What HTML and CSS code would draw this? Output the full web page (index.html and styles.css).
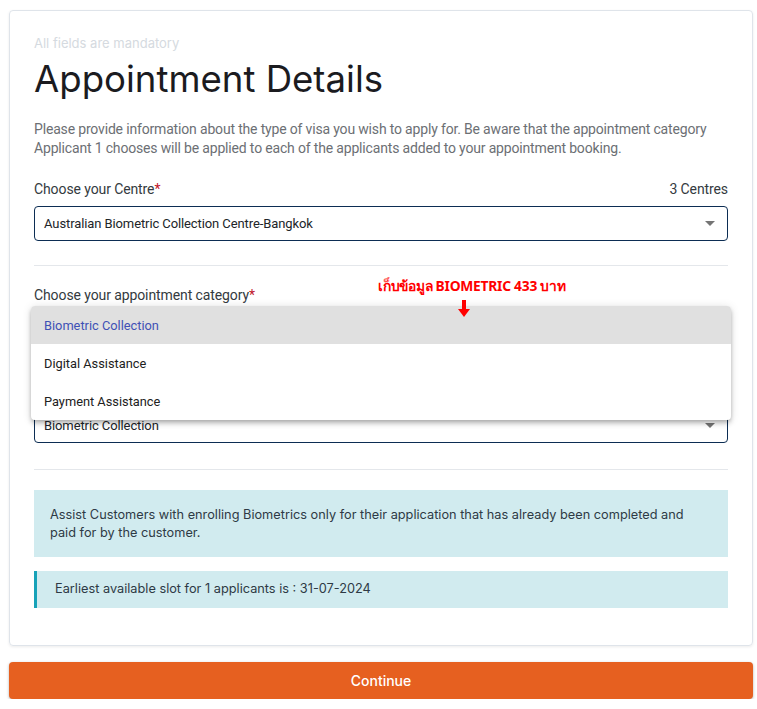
FILE: index.html
```html
<!DOCTYPE html>
<html>
<head>
<meta charset="utf-8">
<link rel="stylesheet" href="styles.css">
</head>
<body>
<div class="page">
  <div class="card">
    <div class="mandatory">All fields are mandatory</div>
    <h1 class="title">Appointment Details</h1>
    <p class="intro">Please provide information about the type of visa you wish to apply for. Be aware that the appointment category Applicant 1 chooses will be applied to each of the applicants added to your appointment booking.</p>

    <div class="field">
      <div class="label-row">
        <span class="label">Choose your Centre<span class="req">*</span></span>
        <span class="count">3 Centres</span>
      </div>
      <div class="select">
        <span>Australian Biometric Collection Centre-Bangkok</span>
        <span class="caret"></span>
      </div>
    </div>

    <hr class="divider">

    <div class="field cat-field">
      <div class="label-row">
        <span class="label">Choose your appointment category<span class="req">*</span></span>
      </div>
      <div class="select lower">
        <span>Biometric Collection</span>
        <span class="caret"></span>
      </div>
      <div class="note">เก็บข้อมูล BIOMETRIC 433 บาท</div>
      <svg class="arrow" width="12" height="17" viewBox="0 0 12 17"><rect x="4" y="0" width="4" height="9" fill="#f00"/><polygon points="0,9 12,9 6,17" fill="#f00"/></svg>
      <ul class="menu">
        <li class="active">Biometric Collection</li>
        <li>Digital Assistance</li>
        <li>Payment Assistance</li>
      </ul>
    </div>

    <hr class="divider second">

    <div class="info">Assist Customers with enrolling Biometrics only for their application that has already been completed and paid for by the customer.</div>
    <div class="slot">Earliest available slot for 1 applicants is : 31-07-2024</div>
  </div>
  <button class="continue">Continue</button>
</div>
</body>
</html>
```
FILE: styles.css
```css
* { box-sizing: border-box; }
body {
  margin: 0;
  background: #fff;
  font-family: Inter, "Noto Sans", sans-serif;
  color: #212529;
}
.page {
  padding: 10px 5px 0 9px;
  width: 757px;
}
.card {
  width: 744px;
  border: 1px solid #dfe4ea;
  border-radius: 4px;
  box-shadow: 0 1px 3px rgba(0,0,0,0.08);
  padding: 24px 24px 37px 24px;
}
.mandatory {
  font-size: 13px;
  color: #d5dae0;
  line-height: 16px;
}
.title {
  margin: 6px 0 0 0;
  font-size: 36.6px;
  font-weight: 400;
  line-height: 44px;
  color: #1b1b1f;
}
.intro {
  margin: 19px 0 0 0;
  font-family: Roboto, sans-serif;
  font-size: 14px;
  letter-spacing: -0.17px;
  line-height: 19px;
  color: #6c6f74;
}
.field { margin-top: 23px; }
.label-row {
  display: flex;
  justify-content: space-between;
  font-family: Roboto, sans-serif;
  font-size: 14px;
  letter-spacing: -0.1px;
  color: #343a40;
  line-height: 16px;
}
.req { color: #c0162a; }
.select {
  margin-top: 9px;
  height: 35px;
  border: 1px solid #0c2d53;
  border-radius: 4px;
  display: flex;
  align-items: center;
  justify-content: space-between;
  padding: 0 12px 0 9px;
  font-family: Roboto, sans-serif;
  font-size: 13px;
  letter-spacing: -0.1px;
  color: #212529;
}
.caret {
  width: 0; height: 0;
  border-left: 5px solid transparent;
  border-right: 5px solid transparent;
  border-top: 5px solid #757575;
}
.divider {
  margin: 24px 0 0 0;
  border: 0;
  border-top: 1px solid #e4e7eb;
}
.cat-field { position: relative; margin-top: 21px; }
.select.lower { margin-top: 105px; }
.note {
  position: absolute;
  left: 344px;
  top: -12px;
  font-family: "Noto Sans", sans-serif;
  font-weight: 700;
  font-size: 13.8px;
  color: #f00;
  letter-spacing: -0.25px;
}
.arrow {
  position: absolute;
  left: 424px;
  top: 13px;
  z-index: 3;
}
.menu {
  position: absolute;
  left: -3px;
  right: -3px;
  top: 19px;
  margin: 0;
  padding: 0;
  list-style: none;
  background: #fff;
  border-radius: 4px;
  box-shadow: 0 2px 4px -1px rgba(0,0,0,0.2), 0 4px 5px rgba(0,0,0,0.14), 0 1px 10px rgba(0,0,0,0.12);
  overflow: hidden;
  z-index: 2;
}
.menu li {
  height: 38px;
  display: flex;
  align-items: center;
  padding-left: 13px;
  font-family: Roboto, sans-serif;
  font-size: 12.8px;
  color: #212121;
}
.menu li.active {
  background: #e0e0e0;
  color: #3f51b5;
}
.divider.second { margin-top: 26px; }
.info {
  margin-top: 20px;
  background: #d1ebef;
  padding: 16px 16px 15px;
  font-size: 12.75px;
  line-height: 18px;
  color: #2e3a45;
}
.slot {
  margin-top: 14px;
  background: #d1ebef;
  border-left: 3px solid #17a2b8;
  padding: 9px 18px;
  height: 37px;
  font-size: 12.75px;
  line-height: 18px;
  color: #2e3a45;
}
.continue {
  display: block;
  margin-top: 16px;
  width: 744px;
  height: 37px;
  border: 0;
  border-radius: 4px;
  background: #e66020;
  color: #fff;
  font-family: Inter, sans-serif;
  font-size: 14px;
  font-weight: 500;
  box-shadow: 0 1px 3px rgba(0,0,0,0.3);
}
```
